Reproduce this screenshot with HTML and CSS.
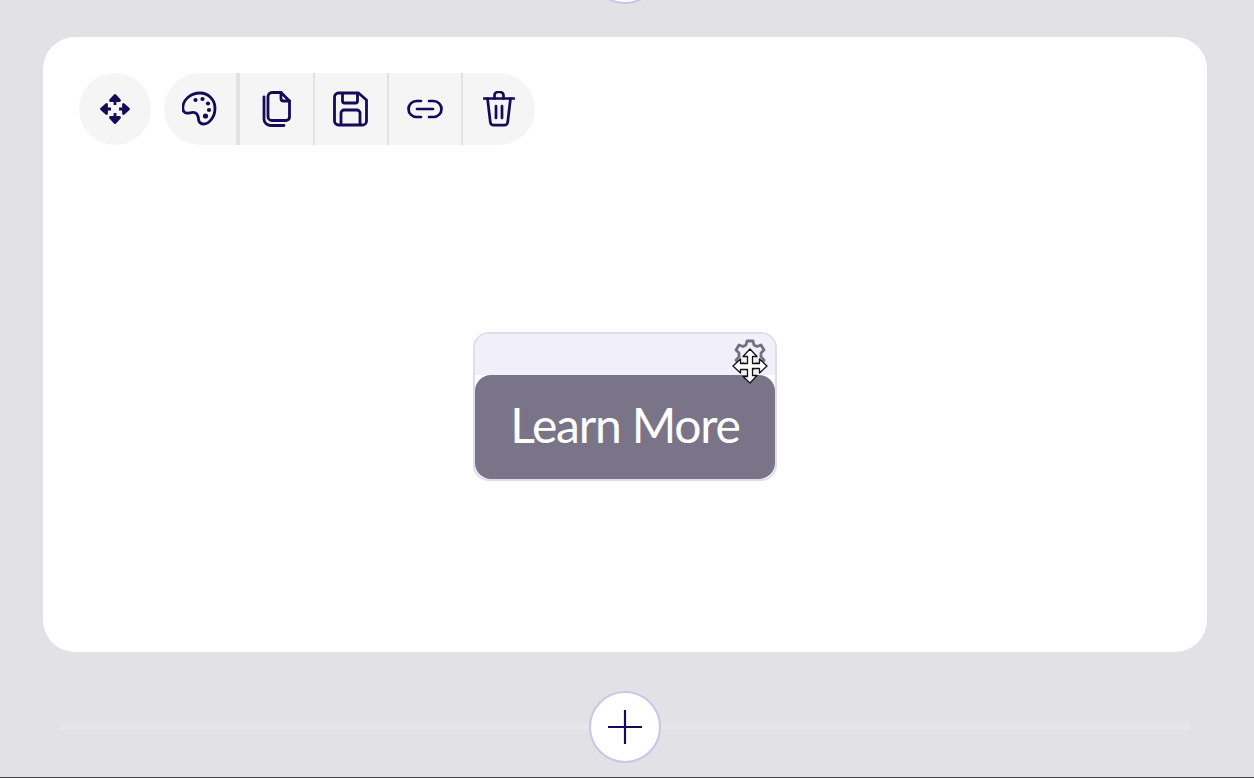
FILE: index.html
```html
<!DOCTYPE html>
<html lang="en">
<head>
    <meta charset="UTF-8">
    <meta name="viewport" content="width=device-width, initial-scale=1.0">
    <title>Block editor</title>
    <link rel="stylesheet" href="styles.css">
</head>
<body>
    <div class="page">
        <div class="add-row add-row-top">
            <button class="add-button" aria-label="Add block above"></button>
        </div>

        <section class="card">
            <div class="toolbar">
                <button class="tool tool-move" aria-label="Move">
                    <svg width="32" height="32" viewBox="0 0 32 32" fill="currentColor" stroke="currentColor" stroke-width="2.800" stroke-linejoin="round">
                        <path d="M16 2.500L20.500 7.500H11.500zM16 6v6" />
                        <path d="M16 29.500L20.500 24.500H11.500zM16 26v-6" />
                        <path d="M2.500 16L7.500 11.500V20.500zM6 16h6" />
                        <path d="M29.500 16L24.500 11.500V20.500zM26 16h-6" />
                    </svg>
                </button>

                <div class="tool-group">
                    <button class="tool tool-first" aria-label="Colors">
                        <svg width="36" height="36" viewBox="0 0 36 36" fill="none" stroke="currentColor" stroke-width="2.800" stroke-linejoin="round">
                            <path d="M18 2c8.500 0 15 6.800 15 15.200 0 8.400-5.500 15.800-11.500 15.800-3.200 0-4.800-1.800-5-4.800-.3-3.800-1.500-6.800-5.500-6.800-2.500 0-3.500.8-6 .8C2.500 22.200.8 20 .8 17 .8 9 8.500 2 18 2z"/>
                            <g fill="currentColor" stroke="none">
                                <circle cx="13.500" cy="9" r="2.100"/>
                                <circle cx="20.500" cy="8" r="2.100"/>
                                <circle cx="26" cy="12.500" r="2.100"/>
                                <circle cx="27" cy="19" r="2.100"/>
                                <circle cx="23.500" cy="25" r="2.600"/>
                            </g>
                        </svg>
                    </button>
                    <button class="tool tool-second" aria-label="Duplicate">
                        <svg width="36" height="36" viewBox="0 0 36 36" fill="none" stroke="currentColor" stroke-width="2.800" stroke-linejoin="round" stroke-linecap="round">
                            <path d="M13 1.500h9l8.500 8.500v16a3.500 3.500 0 0 1-3.500 3.500H13a4 4 0 0 1-4-4V5.500a4 4 0 0 1 4-4z"/>
                            <path d="M22 1.500v6a2.500 2.500 0 0 0 2.500 2.500h6"/>
                            <path d="M5 6v22a6.500 6.500 0 0 0 6.500 6.500H25"/>
                        </svg>
                    </button>
                    <button class="tool" aria-label="Save">
                        <svg width="36" height="36" viewBox="0.5 0 36 36" fill="none" stroke="currentColor" stroke-width="2.800" stroke-linejoin="round">
                            <path d="M6 2h20l8 7v21a4 4 0 0 1-4 4H6a4 4 0 0 1-4-4V6a4 4 0 0 1 4-4z"/>
                            <path d="M10 2v8a2 2 0 0 0 2 2h11a2 2 0 0 0 2-2V2"/>
                            <path d="M8.500 34V22a3 3 0 0 1 3-3h13a3 3 0 0 1 3 3v12"/>
                        </svg>
                    </button>
                    <button class="tool" aria-label="Copy link">
                        <svg width="36" height="20" viewBox="0 0 36 20" fill="none" stroke="currentColor" stroke-width="2.700" stroke-linecap="round">
                            <path d="M14 2H9.500a8 8 0 0 0 0 16H14"/>
                            <path d="M22 2h4.500a8 8 0 0 1 0 16H22"/>
                            <path d="M10 10h16"/>
                        </svg>
                    </button>
                    <button class="tool tool-last" aria-label="Delete">
                        <svg width="32" height="36" viewBox="0 0 32 36" fill="none" stroke="currentColor" stroke-width="2.700" stroke-linecap="round" stroke-linejoin="round">
                            <path d="M1 7.500h30"/>
                            <path d="M11.500 7.500V4.500A3.500 3.500 0 0 1 15 1h2a3.500 3.500 0 0 1 3.500 3.500v3"/>
                            <path d="M4.500 7.500l2.800 23.500a3.500 3.500 0 0 0 3.500 3.200h10.400a3.500 3.500 0 0 0 3.500-3.200l2.800-23.500"/>
                            <path d="M13 15v12M19 15v12"/>
                        </svg>
                    </button>
                </div>
            </div>

            <div class="stage">
                <div class="cta-block">
                    <div class="cta-header"></div>
                    <a class="cta-button" href="#">Learn More</a>

                    <svg class="cta-gear" width="32" height="32" viewBox="0 0 32 32" fill="none" stroke="#73707f" stroke-width="2.800" stroke-linejoin="round">
                        <path d="M13 2h6l1 4 3 1.500 4-1.500 3 5-3 3v4l3 3-3 5-4-1.500-3 1.500-1 4h-6l-1-4-3-1.500-4 1.500-3-5 3-3v-4l-3-3 3-5 4 1.500 3-1.500z"/>
                    </svg>
                    <svg class="cta-cursor" width="36" height="36" viewBox="0 0 36 36" fill="#fff" stroke="#111" stroke-width="1.300" stroke-linejoin="round">
                        <path d="M18 1l7 7.500h-4.500V15.500h7V11L35 18l-7.500 7v-4.500h-7v7H25L18 35l-7-6.500h4.500v-7h-7V25L1 18l7.500-7v4.500h7V8.500H11z"/>
                    </svg>
                </div>
            </div>
        </section>

        <div class="add-row add-row-bottom">
            <span class="add-line"></span>
            <button class="add-button" aria-label="Add block below">
                <svg width="36" height="36" viewBox="0 0 36 36" fill="none" stroke="currentColor" stroke-width="2.200">
                    <path d="M18 1v34M1 18h34"/>
                </svg>
            </button>
        </div>
    </div>
</body>
</html>
```

FILE: styles.css
```css
* {
    box-sizing: border-box;
}

html, body {
    margin: 0;
    height: 100%;
    overflow: hidden;
}

body {
    background-color: #e1e1e6;
    font-family: Lato, "Liberation Sans", sans-serif;
    color: #160a58;
}

.page {
    height: 778px;
    padding: 0 47px 0 43px;
    border-bottom: 1px solid #444;
    overflow: hidden;
}

button {
    border: none;
    padding: 0;
    color: inherit;
    font: inherit;
}

/* Add block rows */
.add-row {
    position: relative;
    display: flex;
    justify-content: center;
    align-items: center;
    height: 72px;
}

.add-row-top {
    margin-top: -68px;
}

.add-row-bottom {
    margin-top: 39px;
}

.add-line {
    position: absolute;
    left: 17px;
    right: 17px;
    top: 32px;
    height: 7px;
    background-color: #e6e6ea;
}

.add-button {
    position: relative;
    width: 72px;
    height: 72px;
    display: flex;
    align-items: center;
    justify-content: center;
    background-color: #fff;
    border: 2px solid #cac6ea;
    border-radius: 50%;
}

/* Card */
.card {
    height: 615px;
    margin-top: 33px;
    padding: 36px;
    background-color: #fff;
    border-radius: 32px;
}

.toolbar {
    display: flex;
    gap: 13px;
}

.tool {
    display: flex;
    align-items: center;
    justify-content: center;
    width: 74px;
    height: 72px;
    background-color: #f5f5f6;
    border-right: 2px solid #e2e2e6;
}

.tool-move {
    width: 72px;
    border-right: none;
    border-radius: 50%;
}

.tool-group {
    display: flex;
}

.tool-first {
    width: 76px;
    border-right-width: 4px;
    border-radius: 36px 0 0 36px;
}

.tool-second {
    width: 75px;
}

.tool-last {
    width: 72px;
    border-right: none;
    border-radius: 0 36px 36px 0;
}

/* Call to action block */
.stage {
    display: flex;
    justify-content: center;
    padding-top: 187px;
}

.cta-block {
    position: relative;
    width: 304px;
    height: 149px;
    border: 2px solid #dfdde8;
    border-radius: 16px;
    background-color: #fff;
}

.cta-header {
    height: 41px;
    background-color: #f0effa;
    border-radius: 14px 14px 0 0;
}

.cta-button {
    display: flex;
    align-items: center;
    justify-content: center;
    height: 104px;
    padding-bottom: 6px;
    background-color: #797488;
    border-radius: 16px;
    color: #fff;
    font-size: 48px;
    font-weight: 400;
    letter-spacing: -1.2px;
    text-decoration: none;
}

.cta-gear {
    position: absolute;
    top: 5px;
    right: 9px;
}

.cta-cursor {
    position: absolute;
    top: 14px;
    right: 7px;
}
```
